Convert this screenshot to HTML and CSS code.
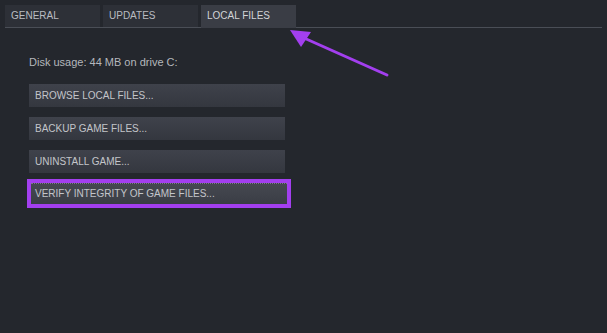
FILE: index.html
```html
<!DOCTYPE html>
<html>
<head>
<meta charset="utf-8">
<link rel="stylesheet" href="styles.css">
</head>
<body>
<div class="page">
  <div class="tabs">
    <div class="tab">GENERAL</div>
    <div class="tab">UPDATES</div>
    <div class="tab active">LOCAL FILES</div>
  </div>
  <div class="content">
    <div class="disk">Disk usage: 44 MB on drive C:</div>
    <div class="buttons">
      <div class="btn">BROWSE LOCAL FILES...</div>
      <div class="btn">BACKUP GAME FILES...</div>
      <div class="btn">UNINSTALL GAME...</div>
      <div class="highlight">
        <div class="btn focus">VERIFY INTEGRITY OF GAME FILES...</div>
      </div>
    </div>
  </div>
  <svg class="arrow" width="607" height="333" viewBox="0 0 607 333">
    <line x1="304" y1="38" x2="387" y2="75" stroke="#a33fef" stroke-width="3" stroke-linecap="round"/>
    <polygon points="290,30 311,32 301,47" fill="#a33fef"/>
  </svg>
</div>
</body>
</html>
```

FILE: styles.css
```css
html, body {
  margin: 0;
  padding: 0;
  background: #23262c;
}
.page {
  position: relative;
  width: 607px;
  height: 333px;
  background: #24272d;
  font-family: "Liberation Sans", Arial, sans-serif;
  overflow: hidden;
}
.tabs {
  display: flex;
  gap: 3px;
  margin-left: 5px;
  padding-top: 5px;
  width: 597px;
  height: 22px;
  border-bottom: 1px solid #4a4e56;
}
.tab {
  width: 95px;
  height: 22px;
  box-sizing: border-box;
  padding-left: 6px;
  line-height: 22px;
  font-size: 10px;
  color: #b9bcc1;
  background: #2d3037;
}
.tab.active {
  height: 23px;
  background: #3a3d45;
  color: #d2d4d8;
}
.content {
  padding-left: 29px;
}
.disk {
  margin-top: 27px;
  height: 14px;
  line-height: 14px;
  font-size: 11px;
  color: #b4b7bc;
}
.buttons {
  margin-top: 15px;
  display: flex;
  flex-direction: column;
  gap: 10px;
}
.btn {
  width: 256px;
  height: 23px;
  box-sizing: border-box;
  padding-left: 6px;
  line-height: 23px;
  font-size: 10px;
  color: #c3c5ca;
  background: linear-gradient(#3f424b, #34373f);
}
.highlight {
  margin-top: -4px;
  margin-left: -2px;
  width: 264px;
  box-sizing: border-box;
  border: 4px solid #a33fef;
}
.btn.focus {
  height: 21px;
  line-height: 19px;
  padding-left: 4px;
  border-top: 1px dotted #7b7e86;
  background: linear-gradient(#454850, #3a3d45);
}
.arrow {
  position: absolute;
  left: 0;
  top: 0;
  pointer-events: none;
}
```
